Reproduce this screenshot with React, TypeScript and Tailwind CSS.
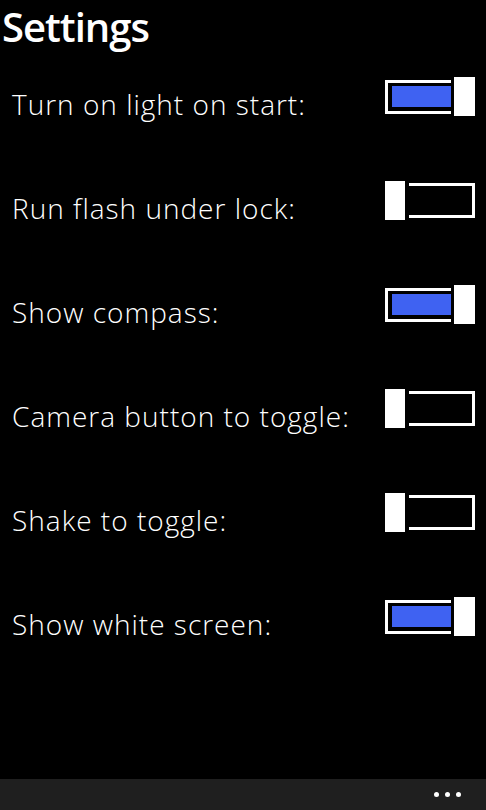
import React from 'react';

const settings = [
  { label: 'Turn on light on start:', on: true },
  { label: 'Run flash under lock:', on: false },
  { label: 'Show compass:', on: true },
  { label: 'Camera button to toggle:', on: false },
  { label: 'Shake to toggle:', on: false },
  { label: 'Show white screen:', on: true },
];

function Toggle({ on }: { on: boolean }) {
  if (on) {
    return (
      <div className="flex items-center gap-[3px] w-[90px] h-[39px]">
        <div className="w-[66px] h-[34px] border-y-[3px] border-l-[3px] border-white flex items-center pl-[4px]">
          <div className="flex-1 h-[21px] bg-[#3f62f2]" />
        </div>
        <div className="w-[21px] h-[39px] bg-white" />
      </div>
    );
  }
  return (
    <div className="flex items-center gap-[4px] w-[90px] h-[39px]">
      <div className="w-[20px] h-[39px] bg-white" />
      <div className="w-[66px] h-[35px] border-y-[3px] border-r-[3px] border-white" />
    </div>
  );
}

export default function App() {
  return (
    <div className="w-[486px] h-[810px] bg-black text-white flex flex-col font-['Open_Sans',sans-serif] overflow-hidden">
      <div className="h-[44.5px] pt-[7px] pl-[2px]">
        <h1 className="text-[40px] font-semibold leading-[40px] tracking-[-1px]">Settings</h1>
      </div>

      <div className="flex flex-col">
        {settings.map((s) => (
          <div key={s.label} className="h-[104px] flex items-center justify-between pl-[12px] pr-[11px]">
            <span className="text-[28px] font-light leading-none tracking-[1px] mt-[14px]">{s.label}</span>
            <Toggle on={s.on} />
          </div>
        ))}
      </div>

      <div className="flex-1" />

      <div className="h-[31px] bg-[#1f1f1f] flex items-center justify-end gap-[6px] pr-[25px]">
        <span className="w-[5px] h-[5px] rounded-full bg-white" />
        <span className="w-[5px] h-[5px] rounded-full bg-white" />
        <span className="w-[5px] h-[5px] rounded-full bg-white" />
      </div>
    </div>
  );
}
